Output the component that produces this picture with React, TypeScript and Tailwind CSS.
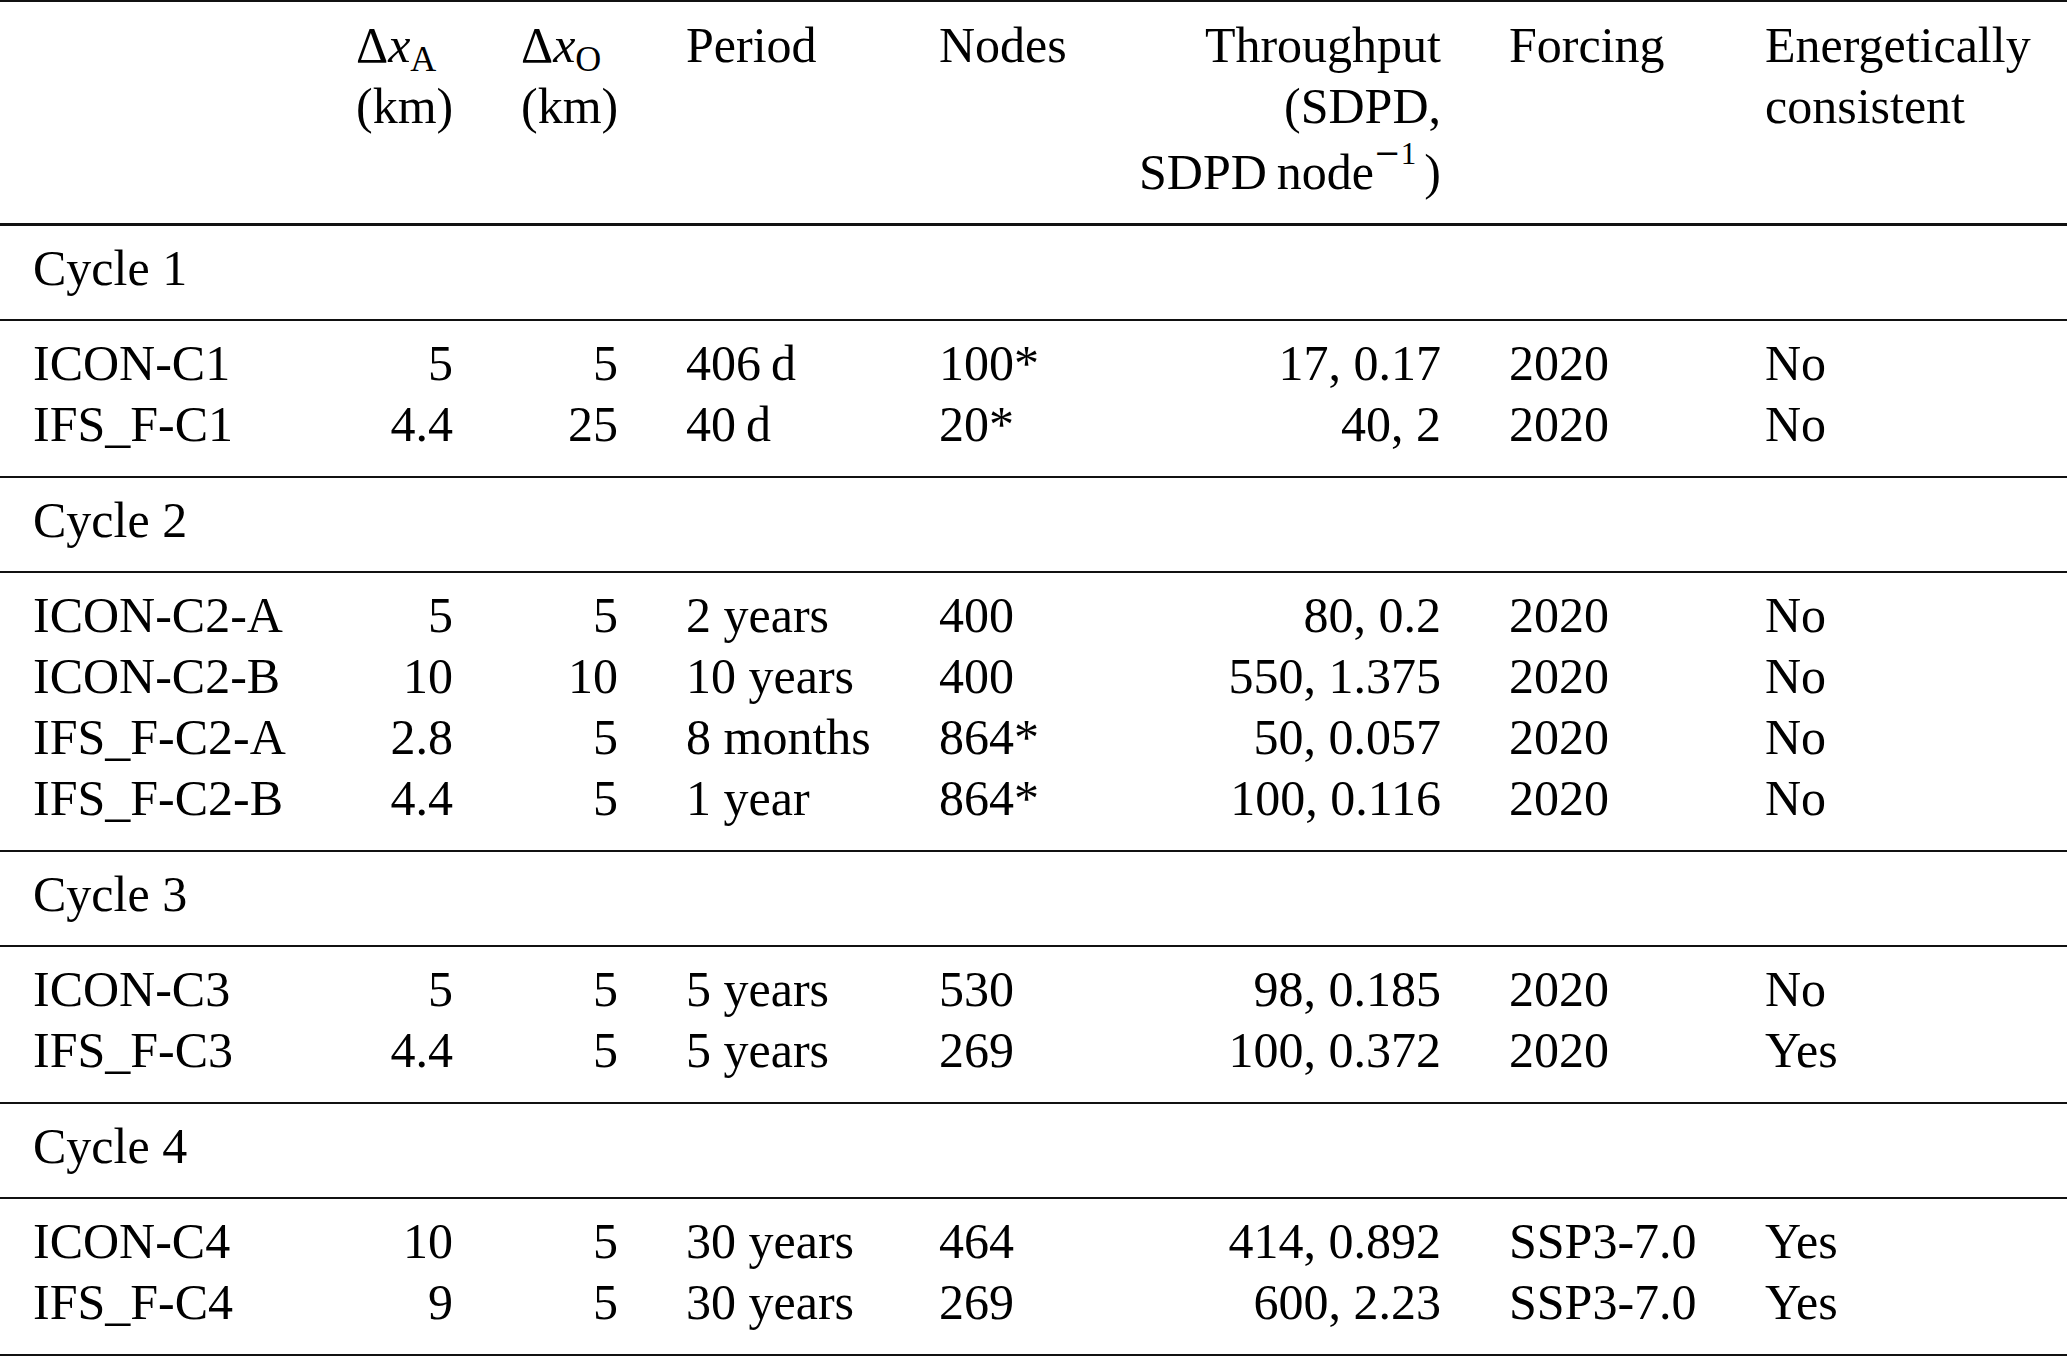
import * as React from "react";

type Row = {
  name: string;
  dxA: string;
  dxO: string;
  period: string;
  nodes: string;
  throughput: string;
  forcing: string;
  consistent: string;
};

type Cycle = { label: string; rows: Row[] };

const CYCLES: Cycle[] = [
  {
    label: "Cycle 1",
    rows: [
      { name: "ICON-C1", dxA: "5", dxO: "5", period: "406\u2009d", nodes: "100*", throughput: "17, 0.17", forcing: "2020", consistent: "No" },
      { name: "IFS_F-C1", dxA: "4.4", dxO: "25", period: "40\u2009d", nodes: "20*", throughput: "40, 2", forcing: "2020", consistent: "No" },
    ],
  },
  {
    label: "Cycle 2",
    rows: [
      { name: "ICON-C2-A", dxA: "5", dxO: "5", period: "2 years", nodes: "400", throughput: "80, 0.2", forcing: "2020", consistent: "No" },
      { name: "ICON-C2-B", dxA: "10", dxO: "10", period: "10 years", nodes: "400", throughput: "550, 1.375", forcing: "2020", consistent: "No" },
      { name: "IFS_F-C2-A", dxA: "2.8", dxO: "5", period: "8 months", nodes: "864*", throughput: "50, 0.057", forcing: "2020", consistent: "No" },
      { name: "IFS_F-C2-B", dxA: "4.4", dxO: "5", period: "1 year", nodes: "864*", throughput: "100, 0.116", forcing: "2020", consistent: "No" },
    ],
  },
  {
    label: "Cycle 3",
    rows: [
      { name: "ICON-C3", dxA: "5", dxO: "5", period: "5 years", nodes: "530", throughput: "98, 0.185", forcing: "2020", consistent: "No" },
      { name: "IFS_F-C3", dxA: "4.4", dxO: "5", period: "5 years", nodes: "269", throughput: "100, 0.372", forcing: "2020", consistent: "Yes" },
    ],
  },
  {
    label: "Cycle 4",
    rows: [
      { name: "ICON-C4", dxA: "10", dxO: "5", period: "30 years", nodes: "464", throughput: "414, 0.892", forcing: "SSP3-7.0", consistent: "Yes" },
      { name: "IFS_F-C4", dxA: "9", dxO: "5", period: "30 years", nodes: "269", throughput: "600, 2.23", forcing: "SSP3-7.0", consistent: "Yes" },
    ],
  },
];

// column widths follow the widest entry of each column, 68px between columns
const GRID =
  "grid grid-cols-[255px_97px_97px_185px_128px_306px_188px_268px] gap-x-[68px] px-[33px]";

function Delta({ sub }: { sub: string }) {
  return (
    <span className="whitespace-nowrap">
      Δ<span className="italic">x</span>
      <span className="relative top-[9px] text-[36px] leading-none">{sub}</span>
    </span>
  );
}

function HeaderRow() {
  return (
    <div className={`${GRID} border-t-2 border-b-[3px] border-[#111] pt-[13px] pb-[20px]`}>
      <div />
      <div className="text-left">
        <Delta sub="A" />
        <br />
        (km)
      </div>
      <div className="text-left">
        <Delta sub="O" />
        <br />
        (km)
      </div>
      <div>Period</div>
      <div>Nodes</div>
      <div className="text-right whitespace-nowrap">
        Throughput
        <br />
        (SDPD,
        <br />
        <span className="inline-block pt-[5px]">
          SDPD{"\u2009"}node
          <span className="relative -top-[25px] leading-none">
            <span className="text-[32px]" style={{ fontFamily: '"DejaVu Serif", serif' }}>
              −
            </span>
            <span className="text-[31px]">1</span>
          </span>
          <span className="ml-[8px]">)</span>
        </span>
      </div>
      <div>Forcing</div>
      <div>
        Energetically
        <br />
        consistent
      </div>
    </div>
  );
}

function DataRow({ row }: { row: Row }) {
  return (
    <div className={`${GRID} whitespace-nowrap`}>
      <div className="text-left">{row.name}</div>
      <div className="text-right">{row.dxA}</div>
      <div className="text-right">{row.dxO}</div>
      <div className="text-left">{row.period}</div>
      <div className="text-left">{row.nodes}</div>
      <div className="text-right">{row.throughput}</div>
      <div className="text-left">{row.forcing}</div>
      <div className="text-left">{row.consistent}</div>
    </div>
  );
}

export default function App() {
  return (
    <div
      className="min-h-screen w-[2067px] bg-white text-[50px] leading-[61px] text-black"
      style={{ fontFamily: '"Liberation Serif", "Times New Roman", serif' }}
    >
      <HeaderRow />
      {CYCLES.map((cycle) => (
        <React.Fragment key={cycle.label}>
          <div className="border-b-2 border-[#111] px-[33px] pt-[12px] pb-[20px]">{cycle.label}</div>
          <div className="border-b-2 border-[#111] pt-[12px] pb-[21px]">
            {cycle.rows.map((row) => (
              <DataRow key={row.name} row={row} />
            ))}
          </div>
        </React.Fragment>
      ))}
    </div>
  );
}
